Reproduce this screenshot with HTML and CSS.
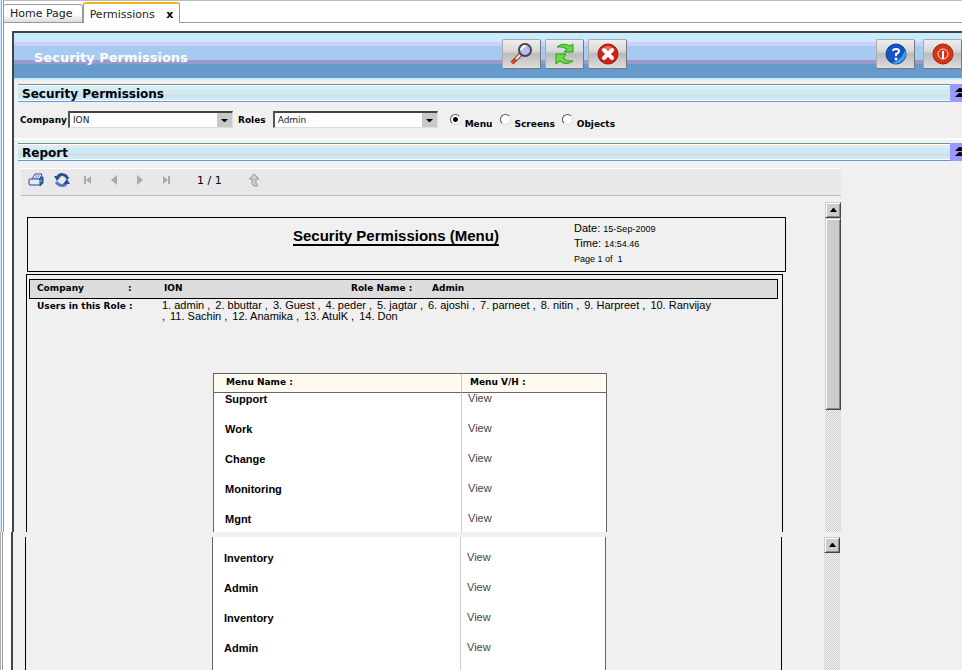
FILE: index.html
```html
<!DOCTYPE html>
<html lang="en">
<head>
<meta charset="utf-8">
<title>Security Permissions</title>
<link rel="stylesheet" href="styles.css">
</head>
<body>
<div class="slab slab-main">
  <div class="edge"></div>
  <div class="workspace">
    <nav class="tabs">
      <a class="tab" href="#">Home Page</a>
      <a class="tab tab-active" href="#">Permissions <span class="tab-close">x</span></a>
      <span class="tab-rest"></span>
    </nav>
    <main class="panel">
      <header class="banner">
        <h1>Security Permissions</h1>
        <div class="tools">
          <button class="tool" aria-label="Search"><svg width="24" height="24" viewBox="0 0 24 24"><path d="M2 21 10 13" stroke="#7b4b3b" stroke-width="4"/><path d="M2 21 7 16" stroke="#e63b25" stroke-width="3"/><path d="M6 17 10 13" stroke="#fff0c0" stroke-width="2"/><circle cx="15" cy="8" r="6" fill="#b9bdf2" stroke="#44444c" stroke-width="2"/><path d="M11 8q1-4 5-4" stroke="#fff" stroke-width="2" fill="none"/></svg></button>
          <button class="tool" aria-label="Refresh"><svg width="24" height="24" viewBox="0 0 24 24" fill="#66dd3c" stroke="#2d9824"><path d="M4 5Q10 0 17 4L20 2V10H11L14 7Q9 4 4 5Z"/><path d="M20 19Q13 24 7 19L3 22V12H13L10 16Q14 20 20 19Z"/></svg></button>
          <button class="tool" aria-label="Cancel"><svg width="24" height="24" viewBox="0 0 24 24"><circle cx="12" cy="12" r="10" fill="#d71f13" stroke="#8e1710"/><path d="M5 8Q12 0 19 8" fill="#ed6557"/><path d="M8 8 16 16M16 8 8 16" stroke="#fff" stroke-width="4" stroke-linecap="round"/></svg></button>
        </div>
        <div class="tools tools-end">
          <button class="tool" aria-label="Help"><svg width="24" height="24" viewBox="0 0 24 24"><circle cx="12" cy="12" r="10" fill="#1256c4" stroke="#123f8a"/><path d="M21 8A10 10 0 0 1 8 21Q18 18 21 8" fill="#39a2e8"/><path d="M9 9q0-2 3-2t3 2q0 2-3 3v2" stroke="#fff" stroke-width="2" fill="none"/><circle cx="12" cy="17" r="1.400" fill="#fff"/></svg></button>
          <button class="tool" aria-label="Exit"><svg width="24" height="24" viewBox="0 0 24 24"><circle cx="12" cy="12" r="10" fill="#d43514" stroke="#9c2410"/><circle cx="12" cy="12" r="5" fill="none" stroke="#ffd9cc" stroke-width="1"/><path d="M12 9V17" stroke="#fff" stroke-width="2"/></svg></button>
        </div>
      </header>
      <section class="section">
        <div class="bar"><h2>Security Permissions</h2><button class="fold" aria-label="Collapse filters"><svg width="10" height="10" viewBox="0 0 10 10"><path d="M0 4 4 0H6L10 4ZM0 9 4 5H6L10 9Z"/></svg></button></div>
        <form class="filters">
          <label for="company">Company</label>
          <span class="pick"><select id="company"><option>ION</option></select><svg width="7" height="4" viewBox="0 0 7 4"><path d="M0 0H7L4 3H3Z"/></svg></span>
          <label for="roles" class="roles">Roles</label>
          <span class="pick"><select id="roles"><option>Admin</option></select><svg width="7" height="4" viewBox="0 0 7 4"><path d="M0 0H7L4 3H3Z"/></svg></span>
          <span class="kinds">
            <input type="radio" name="kind" id="k1" checked><label for="k1">Menu</label>
            <input type="radio" name="kind" id="k2"><label for="k2">Screens</label>
            <input type="radio" name="kind" id="k3"><label for="k3">Objects</label>
          </span>
        </form>
      </section>
      <section class="section">
        <div class="bar"><h2>Report</h2><button class="fold" aria-label="Collapse report"><svg width="10" height="10" viewBox="0 0 10 10"><path d="M0 4 4 0H6L10 4ZM0 9 4 5H6L10 9Z"/></svg></button></div>
        <div class="viewer">
          <div class="viewer-tools">
            <button aria-label="Print"><svg width="16" height="16" viewBox="0 0 16 16"><path d="M4 7 7 2H14L12 7" fill="#fff" stroke="#334a9a"/><path d="M7 4H12M6 6H11" stroke="#6c83c9"/><path d="M11 7 13 5H15V11L12 14Z" fill="#3d5cb8" stroke="#29459a"/><rect x="1" y="7" width="11" height="6" rx="1" fill="#dfe9ff" stroke="#29459a"/><path d="M12 8H14V10H12Z" fill="#25d52c"/></svg></button>
            <button aria-label="Refresh report"><svg width="16" height="16" viewBox="0 0 16 16"><path d="M3 6Q6 0 12 4L14 7" fill="none" stroke="#2b5099" stroke-width="3"/><path d="M0 4H7L3 9Z" fill="#2b5099"/><path d="M13 10Q10 16 4 12L2 10" fill="none" stroke="#4e79c4" stroke-width="3"/><path d="M16 12H9L13 7Z" fill="#2b5099"/></svg></button>
            <button aria-label="First page"><svg width="16" height="16" viewBox="0 0 16 16" fill="#aaa"><path d="M4 4H6V12H4ZM11 4V12L6 8Z"/></svg></button>
            <button aria-label="Previous page"><svg width="16" height="16" viewBox="0 0 16 16" fill="#aaa"><path d="M11 3V13L5 8Z"/></svg></button>
            <button aria-label="Next page"><svg width="16" height="16" viewBox="0 0 16 16" fill="#aaa"><path d="M5 3V13L11 8Z"/></svg></button>
            <button aria-label="Last page"><svg width="16" height="16" viewBox="0 0 16 16" fill="#aaa"><path d="M5 4V12L10 8ZM10 4H12V12H10Z"/></svg></button>
            <span class="pages">1 / 1</span>
            <button aria-label="Up"><svg width="16" height="16" viewBox="0 0 16 16"><path d="M8 2 13 7H10V11L12 14H8L6 12V7H3Z" fill="#ccc" stroke="#999"/></svg></button>
          </div>
          <div class="viewer-body">
            <article class="report">
              <div class="report-head">
                <h3>Security Permissions (Menu)</h3>
                <div class="stamp">
                  <div>Date: <small>15-Sep-2009</small></div>
                  <div>Time: <small>14:54.46</small></div>
                  <div><small>Page 1 of &nbsp;1</small></div>
                </div>
              </div>
              <div class="sheet">
                <div class="band"><span>Company</span><span>:</span><span>ION</span><span>Role Name :</span><span>Admin</span></div>
                <div class="users">
                  <b>Users in this Role :</b>
                  <ul>
                    <li>1. admin ,</li><li>2. bbuttar ,</li><li>3. Guest ,</li><li>4. peder ,</li><li>5. jagtar ,</li><li>6. ajoshi ,</li><li>7. parneet ,</li><li>8. nitin ,</li><li>9. Harpreet ,</li><li>10. Ranvijay</li>
                    <li>,</li><li>11. Sachin ,</li><li>12. Anamika ,</li><li>13. AtulK ,</li><li>14. Don</li>
                  </ul>
                </div>
                <table class="menus">
                  <thead><tr><th>Menu Name :</th><th>Menu V/H :</th></tr></thead>
                  <tbody>
                    <tr><td>Support</td><td>View</td></tr>
                    <tr><td>Work</td><td>View</td></tr>
                    <tr><td>Change</td><td>View</td></tr>
                    <tr><td>Monitoring</td><td>View</td></tr>
                    <tr class="last"><td>Mgnt</td><td>View</td></tr>
                  </tbody>
                </table>
              </div>
            </article>
            <div class="scroll"><div class="scroll-up"><svg width="7" height="4" viewBox="0 0 7 4"><path d="M0 4H7L4 0H3Z"/></svg></div><div class="scroll-thumb"></div></div>
          </div>
        </div>
      </section>
    </main>
  </div>
</div>
<div class="slab slab-next">
  <div class="edge"></div>
  <div class="workspace">
    <div class="panel">
      <div class="viewer-body">
        <div class="report">
          <div class="sheet">
            <table class="menus">
              <tbody>
                <tr><td>Inventory</td><td>View</td></tr>
                <tr><td>Admin</td><td>View</td></tr>
                <tr><td>Inventory</td><td>View</td></tr>
                <tr class="last"><td>Admin</td><td>View</td></tr>
              </tbody>
            </table>
          </div>
        </div>
        <div class="scroll"><div class="scroll-up"><svg width="7" height="4" viewBox="0 0 7 4"><path d="M0 4H7L4 0H3Z"/></svg></div></div>
      </div>
    </div>
  </div>
</div>
</body>
</html>
```
FILE: styles.css
```css
* { box-sizing: border-box; }
html { height: 100%; overflow: hidden; }
body {
  margin: 0; min-height: 100%; overflow: hidden;
  display: flex; flex-direction: column;
  background: #fff; color: #000;
  font-family: Verdana, "DejaVu Sans", sans-serif; font-size: 11px;
}
h1, h2, h3, ul { margin: 0; padding: 0; }
button { padding: 0; border: 0; background: none; font: inherit; }
svg { display: block; }

.slab { display: flex; }
.edge { flex: none; width: 3px; border-left: 1px solid #c8ecff; background: linear-gradient(90deg, #aaa 1px, #fff 1px); }
.workspace { flex: 1; min-width: 0; border-left: 1px solid #999; }
.slab-main .workspace { border-top: 1px solid #bbb; }

.tabs { display: flex; align-items: flex-end; height: 22px; }
.tab {
  height: 19px; padding: 0 9px 0 6px; line-height: 18px;
  border: 1px solid #999; border-left: 0; border-radius: 3px 3px 0 0;
  background: linear-gradient(#fff 50%, #ddd); color: #222; text-decoration: none; white-space: nowrap;
}
.tab-active { height: 21px; padding: 0 6px; line-height: 22px; border: 1px solid #999; border-top: 2px solid #f5b51e; border-bottom: 0; background: #fff; }
.tab-close { margin-left: 8px; font-weight: bold; color: #000; }
.tab-rest { flex: 1; border-bottom: 1px solid #999; }

.panel { background: #f0f0f0; border-left: 2px solid #444; }
.slab-main .panel { margin: 8px 0 0 8px; border-top: 2px solid #444; }

.banner {
  display: flex; align-items: flex-start; height: 47px; padding: 6px 0 0 20px; overflow: hidden;
  background: linear-gradient(#c8ecff 9px, #ccccff 9px 13px, #a6caf0 13px 27px, #9999cc 27px 31px, #6699cc 31px 45px, #c8ecff 45px);
}
.banner h1 { flex: none; width: 468px; padding-top: 11px; font-size: 13px; line-height: 16px; color: #fff; }
.tools { display: flex; gap: 4px; }
.tools-end { margin-left: auto; gap: 8px; }
.tool {
  display: grid; place-items: center; width: 39px; height: 30px; flex: none;
  border: 1px solid #999; border-color: #aaa #777 #777 #aaa; border-radius: 2px;
  background: linear-gradient(#eee, #d8d8d8 40%, #bbb 50%, #ddd);
}

.section { padding: 4px 0 0 4px; }
.bar {
  display: flex; justify-content: space-between; height: 18px;
  border-top: 1px solid #5f9999; border-bottom: 1px solid #6699cc;
  background: linear-gradient(#fff 1px, #e6e9ea 1px 4px, #c8ecff 4px 9px, #dcdcdc 9px 12px, #c8ecff 12px 15px, #fff 15px);
}
.bar h2 { padding-left: 4px; font-size: 12px; line-height: 18px; }
.fold { width: 12px; height: 18px; margin-top: -1px; padding-left: 5px; background: #99f; overflow: hidden; }

.filters { display: flex; height: 36px; padding: 9px 0 0 2px; font-size: 9px; font-weight: bold; line-height: 19px; }
.section:first-of-type { border-bottom: 2px solid #fff; }
.section + .section { padding-top: 3px; }
.pick { position: relative; width: 165px; height: 17px; margin-left: 1px; }
.pick svg { position: absolute; right: 5px; top: 8px; }
.pick select {
  appearance: none; display: block; width: 100%; height: 17px; padding: 0 20px 0 3px; border: 1px solid #ddd;
  border-width: 2px 1px 1px 2px; border-color: #444 #ddd #ddd #555; border-radius: 0;
  background: linear-gradient(#c8c8c8, #c8c8c8) right / 15px 100% no-repeat #fff; color: #222;
  font: 9px Verdana, "DejaVu Sans", sans-serif;
}
.roles { margin-left: 5px; }
.roles + .pick { margin-left: 7px; }
.kinds { display: flex; margin-left: 12px; }
.kinds label { margin: 4px 7px 0 4px; }
.kinds input { appearance: none; width: 11px; height: 11px; margin: 3px 0 0; border: 1px solid; border-color: #555 #ddd #ddd #555; border-radius: 50%; background: #fff; }
.kinds input:checked { background: radial-gradient(#000 2px, #fff 3px); }

.viewer { width: 823px; padding: 7px 0 0 3px; }
.viewer-tools { display: flex; align-items: center; height: 28px; padding: 0 7px 4px; gap: 10px; border-top: 1px solid #fff; border-bottom: 1px solid #bbb; background: #e8e8e8; }
.pages { margin: 0 14px 0 13px; }
.viewer-body { display: flex; justify-content: space-between; align-items: flex-start; }

.report { width: 760px; padding: 21px 0 0 5px; font-family: Arial, "Liberation Sans", sans-serif; }
.report-head { display: flex; height: 55px; margin-left: 1px; padding-left: 265px; border: 1px solid #000; width: 759px; }
.report-head h3 { font-size: 15px; line-height: 17px; height: 27px; padding-top: 9px; width: 281px; text-decoration: underline 2px; text-underline-offset: 3px; }
.stamp { padding-top: 3px; line-height: 15px; }
.stamp div { height: 15px; }
.stamp small { font-size: 9px; line-height: 9px; }
.sheet { width: 757px; margin-top: 2px; padding: 4px 4px 0 2px; border: 1px solid #000; border-bottom: 0; }
.band { display: grid; grid-template-columns: 91px 36px 187px 81px 1fr; height: 20px; padding-left: 7px; border: 1px solid #000; background: #dcdcdc; font: bold 9px/16px Verdana, "DejaVu Sans", sans-serif; }
.users { display: flex; padding: 1px 0 0 8px; line-height: 11px; }
.users b { flex: none; width: 125px; font: bold 9px/13px Verdana, "DejaVu Sans", sans-serif; }
.users ul { display: flex; flex-wrap: wrap; column-gap: 5px; width: 554px; list-style: none; white-space: nowrap; }

.menus { width: 394px; margin: 51px 0 0 184px; border-collapse: separate; border-spacing: 0; table-layout: fixed; background: #fff; border: 1px solid #666; border-bottom: 0; }
.menus th { height: 19px; padding: 0 0 2px 12px; border-bottom: 1px solid #666; background: #fffaf0; text-align: left; font: bold 9px/14px Verdana, "DejaVu Sans", sans-serif; }
.menus th:first-child, .menus td:first-child { width: 248px; border-right: 1px solid #ccc; }
.menus td { height: 30px; padding: 0 0 0 11px; vertical-align: top; line-height: 12px; font-size: 11px; font-weight: bold; }
.menus th + th { padding-left: 8px; }
.menus td + td { padding-left: 6px; font-weight: normal; color: #444; line-height: 11px; }
.menus .last td { height: 19px; }

.scroll { align-self: stretch; width: 16px; margin-top: 6px; background: repeating-conic-gradient(#ccc 0 25%, #f4f4f4 0 50%) 0 0 / 2px 2px; }
.scroll-up, .scroll-thumb { background: #ccc; border: 1px solid; border-color: #ccc #444 #444 #ccc; box-shadow: inset 1px 1px #fff, inset -1px -1px #888; }
.scroll-up { display: grid; place-items: center; height: 16px; }
.scroll-thumb { height: 192px; }

.slab-next { flex: 1; }
.slab-next .edge { width: 2px; border-left: 0; }
.slab-next .panel { height: 100%; margin-left: 8px; padding: 5px 0 0 7px; }
.slab-next .viewer-body { width: 820px; height: 100%; }
.slab-next .report { padding: 0 0 0 5px; height: 100%; }
.slab-next .sheet { margin: 0; padding: 0 4px 0 2px; border-top: 0; height: 100%; }
.slab-next .menus { margin-top: 0; border-top: 0; }
.slab-next .menus td { padding-top: 15px; }
.slab-next .menus .last td { height: 43px; }
.slab-next .scroll { margin: 0; }
```
